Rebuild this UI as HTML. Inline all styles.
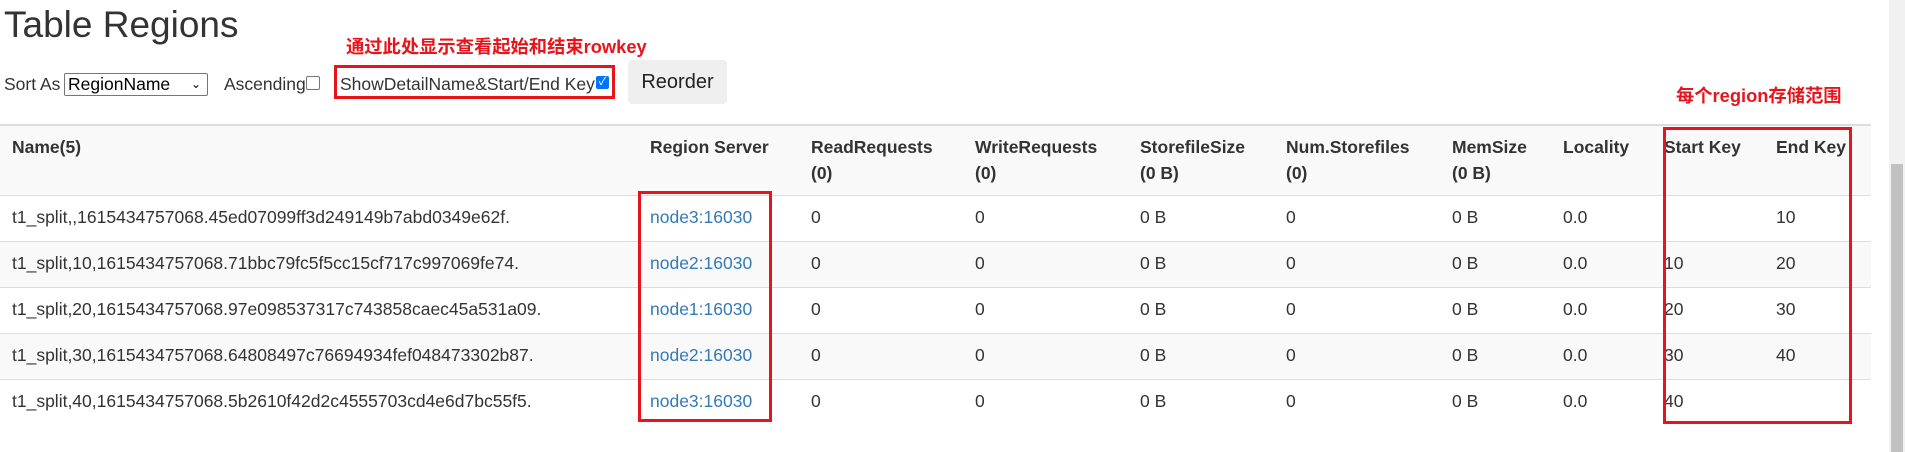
<!DOCTYPE html>
<html><head><meta charset="utf-8"><style>
body{margin:0;width:1905px;height:452px;overflow:hidden;background:#fff;font-family:"Liberation Sans",Arial,"Noto Sans CJK SC",sans-serif;color:#333;font-size:17.5px;position:relative}
.a{position:absolute;white-space:nowrap}
.red{color:#e8141c;font-weight:bold;font-size:18.3px;font-family:"Liberation Sans","Noto Sans CJK SC",sans-serif}
.box{position:absolute;border:3px solid #e8141c;box-sizing:border-box}
.row{position:absolute;left:0;width:1871px;height:46px;border-top:1px solid #ddd;box-sizing:border-box}
.h{font-weight:bold;line-height:26px}
a{color:#337ab7;text-decoration:none}
</style></head><body>
<div class="a" style="left:4px;top:4px;font-size:37px;font-weight:400">Table Regions</div>
<div class="a red" style="left:346px;top:33px">通过此处显示查看起始和结束rowkey</div>
<div class="a red" style="left:1676px;top:82px">每个region存储范围</div>
<div class="a red" style="left:590px;top:165px">是否均衡分配</div>
<div class="a" style="left:4px;top:74px">Sort As</div>
<div class="a" style="left:64px;top:73px;width:144px;height:23px;border:1px solid #767676;box-sizing:border-box;border-radius:2px;padding-left:3px;line-height:21px;color:#000">RegionName<span style="position:absolute;right:6px;top:0;font-size:12px">&#8964;</span></div>
<div class="a" style="left:224px;top:74px">Ascending</div>
<div class="a" style="left:306px;top:76px;width:12px;height:12px;border:1px solid #767676;border-radius:2px"></div>
<div class="a" style="left:340px;top:74px">ShowDetailName&amp;Start/End Key</div>
<div class="a" style="left:596px;top:76px;width:13px;height:13px;background:#0075ff;border-radius:2px;color:#fff;font-size:11px;line-height:13px;text-align:center">✓</div>
<div class="box" style="left:334px;top:65px;width:281px;height:34px"></div>
<div class="a" style="left:628px;top:60px;width:99px;height:44px;background:#efefef;border-radius:4px;text-align:center;line-height:44px;font-size:20px;color:#222">Reorder</div>
<div class="row" style="top:124px;height:71px;background:#f9f9f9;border-top:2px solid #ddd"></div>
<div class="row" style="top:195px"></div>
<div class="row" style="top:241px;background:#f9f9f9"></div>
<div class="row" style="top:287px"></div>
<div class="row" style="top:333px;background:#f9f9f9"></div>
<div class="row" style="top:379px"></div>
<div class="a h" style="left:12px;top:134px">Name(5)</div>
<div class="a h" style="left:650px;top:134px">Region Server</div>
<div class="a h" style="left:811px;top:134px">ReadRequests<br>(0)</div>
<div class="a h" style="left:975px;top:134px">WriteRequests<br>(0)</div>
<div class="a h" style="left:1140px;top:134px">StorefileSize<br>(0 B)</div>
<div class="a h" style="left:1286px;top:134px">Num.Storefiles<br>(0)</div>
<div class="a h" style="left:1452px;top:134px">MemSize<br>(0 B)</div>
<div class="a h" style="left:1563px;top:134px">Locality</div>
<div class="a h" style="left:1664px;top:134px">Start Key</div>
<div class="a h" style="left:1776px;top:134px">End Key</div>
<div id="rows"></div>
<script>
var d=[["t1_split,,1615434757068.45ed07099ff3d249149b7abd0349e62f.","node3","","10"],
["t1_split,10,1615434757068.71bbc79fc5f5cc15cf717c997069fe74.","node2","10","20"],
["t1_split,20,1615434757068.97e098537317c743858caec45a531a09.","node1","20","30"],
["t1_split,30,1615434757068.64808497c76694934fef048473302b87.","node2","30","40"],
["t1_split,40,1615434757068.5b2610f42d2c4555703cd4e6d7bc55f5.","node3","40",""]];
var h="";d.forEach(function(r,i){var t=207+i*46;function c(x,s){h+='<div class="a" style="left:'+x+'px;top:'+t+'px">'+s+'</div>';}
c(12,r[0]);c(650,'<a>'+r[1]+':16030</a>');c(811,'0');c(975,'0');c(1140,'0 B');c(1286,'0');c(1452,'0 B');c(1563,'0.0');c(1664,r[2]);c(1776,r[3]);});
document.getElementById("rows").innerHTML=h;
</script>
<div class="box" style="left:638px;top:191px;width:134px;height:231px"></div>
<div class="box" style="left:1663px;top:127px;width:189px;height:297px"></div>
<div class="a" style="left:1889px;top:0;width:16px;height:452px;background:#f1f1f1"></div>
<div class="a" style="left:1891px;top:164px;width:12px;height:288px;background:#c1c1c1"></div>
</body></html>
